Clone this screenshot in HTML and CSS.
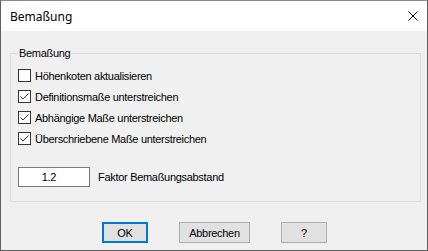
FILE: index.html
```html
<!DOCTYPE html>
<html lang="de">
<head>
    <meta charset="UTF-8">
    <title>Bemaßung</title>
    <link rel="stylesheet" href="styles.css">
</head>
<body>

    <div class="window">
        <!-- Title bar -->
        <div class="titlebar">
            <span class="title">Bemaßung</span>
            <span class="close">
                <svg width="10" height="10" viewBox="0 0 10 10">
                    <path d="M0.5 0.5 L9.5 9.5 M9.5 0.5 L0.5 9.5" stroke="#000" stroke-width="1" fill="none"/>
                </svg>
            </span>
        </div>

        <!-- Dialog body -->
        <div class="dialog">
            <fieldset class="group">
                <legend>Bemaßung</legend>

                <label class="check-row">
                    <span class="box"></span>
                    Höhenkoten aktualisieren
                </label>
                <label class="check-row">
                    <span class="box">
                        <svg width="11" height="11" viewBox="0 0 11 11"><path d="M1.5 5.5 L4 8 L9.5 2.5" stroke="#333" stroke-width="1" fill="none"/></svg>
                    </span>
                    Definitionsmaße unterstreichen
                </label>
                <label class="check-row">
                    <span class="box">
                        <svg width="11" height="11" viewBox="0 0 11 11"><path d="M1.5 5.5 L4 8 L9.5 2.5" stroke="#333" stroke-width="1" fill="none"/></svg>
                    </span>
                    Abhängige Maße unterstreichen
                </label>
                <label class="check-row">
                    <span class="box">
                        <svg width="11" height="11" viewBox="0 0 11 11"><path d="M1.5 5.5 L4 8 L9.5 2.5" stroke="#333" stroke-width="1" fill="none"/></svg>
                    </span>
                    Überschriebene Maße unterstreichen
                </label>

                <div class="factor-row">
                    <input type="text" class="factor" value="1.2">
                    <span>Faktor Bemaßungsabstand</span>
                </div>
            </fieldset>

            <div class="buttons">
                <button class="btn btn-default">OK</button>
                <button class="btn btn-wide">Abbrechen</button>
                <button class="btn">?</button>
            </div>
        </div>
    </div>

</body>
</html>
```
FILE: styles.css
```css
/* General styles */
* {
    box-sizing: border-box;
}

body {
    margin: 0;
    padding: 0;
    font-family: "Liberation Sans", Arial, sans-serif;
    font-size: 11px;
    letter-spacing: -0.3px;
    color: #000;
    background: #fff;
}

.window {
    width: 428px;
    height: 251px;
    border: 1px solid #5f5f5f;
    border-top-color: #8a8a8a;
    display: flex;
    flex-direction: column;
}

/* Title bar */
.titlebar {
    height: 30px;
    background-color: #fff;
    display: flex;
    align-items: center;
    padding-left: 9px;
    padding-right: 9px;
}

.title {
    font-family: "Noto Sans", "Liberation Sans", sans-serif;
    font-size: 12px;
    letter-spacing: 0;
}

.close {
    margin-left: auto;
    display: flex;
}

/* Dialog content */
.dialog {
    flex: 1;
    background-color: #f0f0f0;
    padding: 16px 6px 0 9px;
}

.group {
    margin: 0;
    border: 1px solid #dcdcdc;
    padding: 5px 7px 14px 7px;
}

.group legend {
    padding: 0 1px;
    line-height: 13px;
}

.check-row {
    display: flex;
    align-items: center;
    height: 21px;
    gap: 4px;
}

.box {
    width: 13px;
    height: 13px;
    border: 1px solid #333;
    background-color: #fff;
    display: flex;
}

.factor-row {
    display: flex;
    align-items: center;
    gap: 8px;
    margin-top: 18px;
}

.factor {
    width: 72px;
    height: 20px;
    border: 1px solid #7a7a7a;
    background-color: #fff;
    font-family: inherit;
    font-size: 11px;
    letter-spacing: inherit;
    text-align: center;
    padding: 0 10px 0 0;
    outline: none;
}

/* Buttons */
.buttons {
    display: flex;
    gap: 31px;
    padding-left: 92px;
    margin-top: 20px;
}

.btn {
    width: 46px;
    height: 21px;
    background-color: #e1e1e1;
    border: 1px solid #adadad;
    font-family: inherit;
    font-size: 11px;
    letter-spacing: inherit;
    color: #000;
    padding: 0;
}

.btn-wide {
    width: 71px;
}

.btn-default {
    border: 2px solid #0078d7;
}
```
